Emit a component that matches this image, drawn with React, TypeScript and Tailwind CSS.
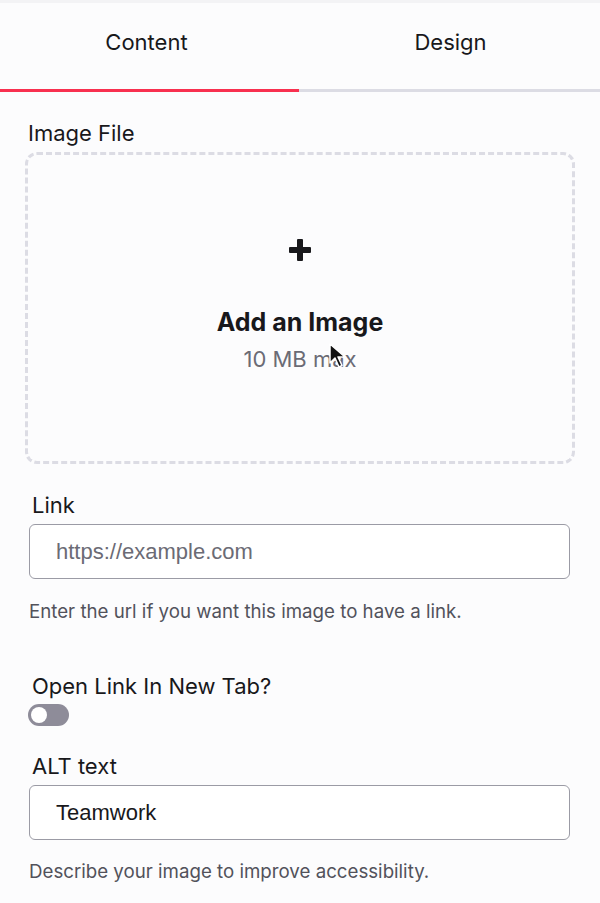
import React from "react";

export default function App() {
  const inter = { fontFamily: "Inter, 'Noto Sans', sans-serif" };
  const arial = { fontFamily: "'Liberation Sans', Arial, sans-serif" };
  return (
    <div className="w-[600px] h-[903px] bg-[#fcfcfd] overflow-hidden relative text-[#18181b]" style={inter}>
      <div className="h-[3px] bg-[#f3f3f5]" />
      <div className="flex">
        <div className="w-[299px] h-[89px] flex justify-center pt-[26px] pr-[6px] text-[22px] leading-[27px] border-b-[3px] border-[#f8304f]">
          Content
        </div>
        <div className="flex-1 h-[89px] flex justify-center pt-[26px] pl-[2px] text-[22px] leading-[27px] border-b-[3px] border-[#dcdce4]">
          Design
        </div>
      </div>
      <div className="px-[25px] pt-[28px]">
        <div className="text-[22px] leading-[27px] pl-[3px]">Image File</div>
        <div className="mt-[5px] h-[312px] border-[3px] border-dashed border-[#dcdce4] rounded-[12px] flex flex-col items-center pt-[84px] relative">
          <svg width="22" height="22" viewBox="0 0 22 22" className="block">
            <rect x="8" y="0" width="6" height="22" fill="#18181b" rx="1" />
            <rect x="0" y="8" width="22" height="6" fill="#18181b" rx="1" />
          </svg>
          <div className="mt-[46px] text-[25px] font-bold leading-[30px]">Add an Image</div>
          <div className="mt-[9px] text-[22px] leading-[27px] text-[#6b6b75]">10 MB max</div>
          <svg width="18" height="28" viewBox="0 0 18 28" className="absolute left-[301px] top-[188px]">
            <path d="M1 1 L1 20 L6 15 L10 24 L13 22.5 L9 14 L16 14 Z" fill="#111" stroke="#fff" strokeWidth="1.5" strokeLinejoin="round" />
          </svg>
        </div>
        <div className="mt-[28px] pl-[7px] text-[22px] leading-[27px]">Link</div>
        <div className="mt-[5px] ml-[4px] w-[541px] h-[55px] border border-[#9b9ba5] rounded-[6px] bg-white flex items-center pl-[26px] text-[22px] text-[#6b6b75]" style={arial}>
          https://example.com
        </div>
        <div className="mt-[21px] pl-[4px] text-[18.7px] leading-[23px] text-[#52525b]">Enter the url if you want this image to have a link.</div>
        <div className="mt-[50px] pl-[7px] text-[22px] leading-[27px]">Open Link In New Tab?</div>
        <div className="mt-[4px] ml-[3px] w-[41px] h-[22px] rounded-full bg-[#8e8c99] flex items-center pl-[3px]">
          <div className="w-[16px] h-[16px] rounded-full bg-white" />
        </div>
        <div className="mt-[27px] pl-[7px] text-[22px] leading-[27px]">ALT text</div>
        <div className="mt-[5px] ml-[4px] w-[541px] h-[55px] border border-[#9b9ba5] rounded-[6px] bg-white flex items-center pl-[26px] text-[22px] text-[#18181b]" style={arial}>
          Teamwork
        </div>
        <div className="mt-[20px] pl-[4px] text-[18.7px] leading-[23px] text-[#52525b]">Describe your image to improve accessibility.</div>
      </div>
    </div>
  );
}
